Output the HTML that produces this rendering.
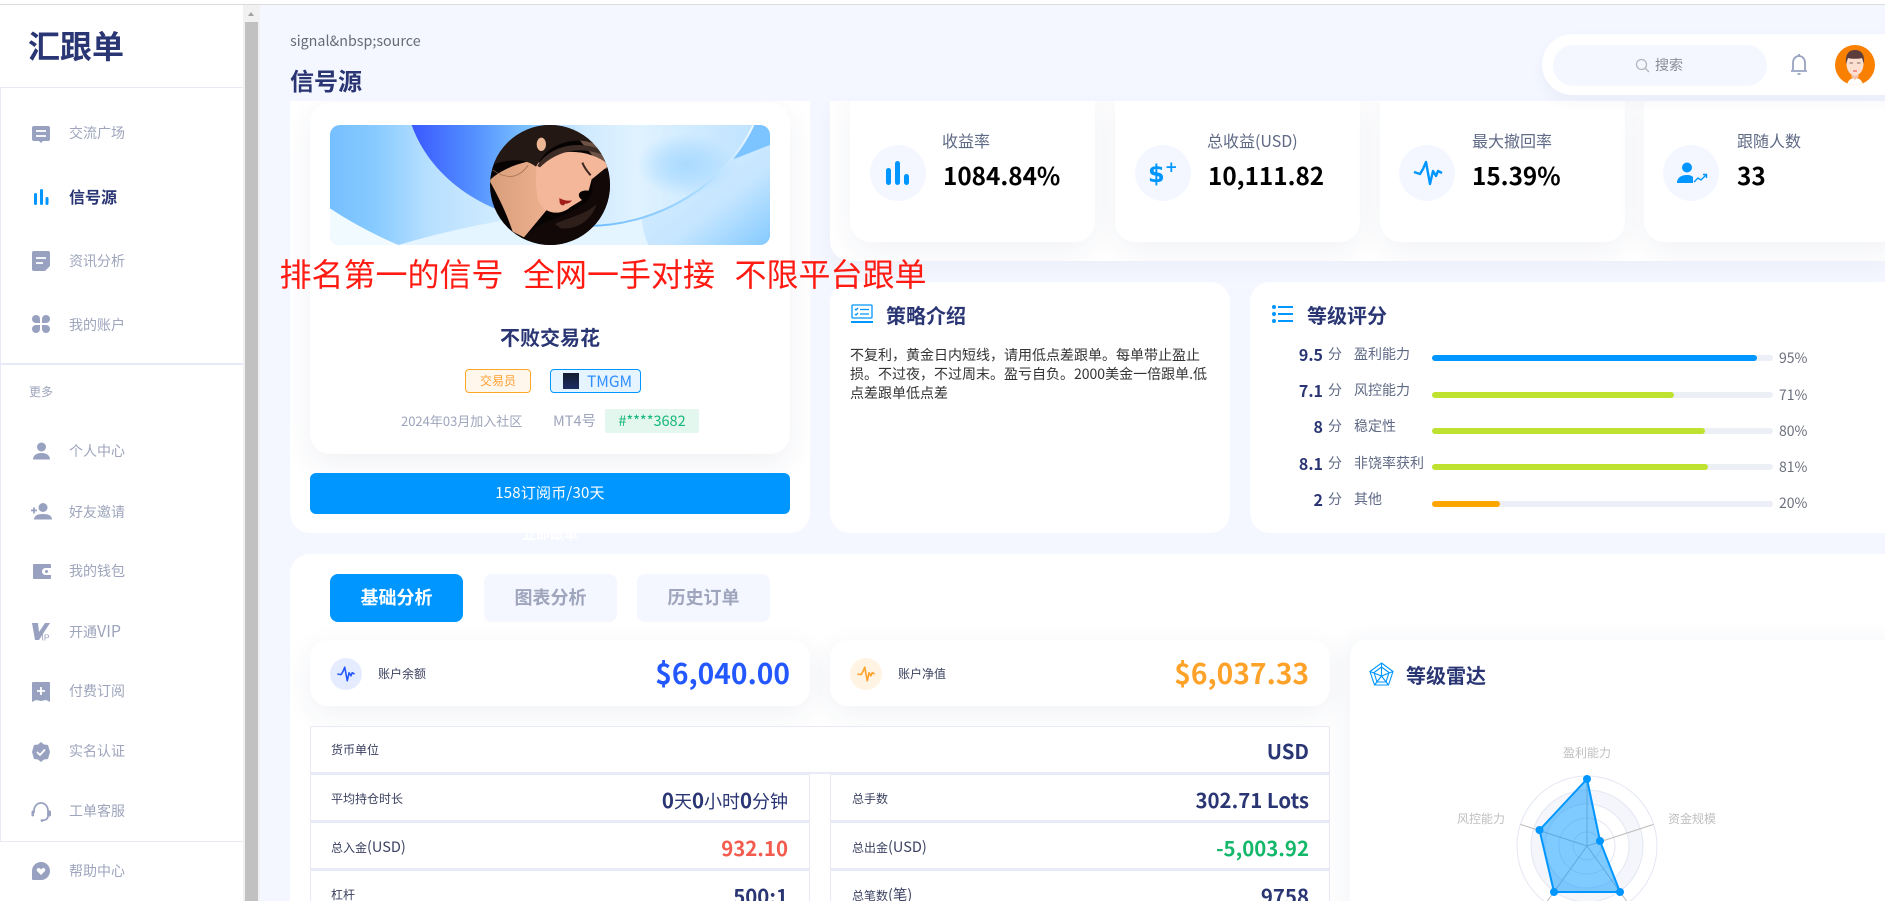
<!DOCTYPE html>
<html lang="zh"><head><meta charset="utf-8"><title>信号源</title>
<style>
html,body{margin:0;padding:0;width:1885px;height:901px;overflow:hidden;background:#f4f7ff}
body{position:relative;font-family:"Noto Sans CJK SC","Liberation Sans",sans-serif;color:#2a3573}
.a,.t{position:absolute}
.t{white-space:nowrap}
svg{position:absolute;overflow:visible}
.side{left:0;top:0;width:243px;height:901px;background:#fff}
.m{left:69px;font-size:14px;line-height:20px;color:#9ea5bc}
.card{background:#fff;border-radius:20px;box-shadow:0 10px 30px rgba(40,55,110,.06)}
.lab{font-size:16px;line-height:20px;color:#5f6a85}
.val{font-size:24.3px;line-height:32px;font-weight:700;color:#000}
.circ{border-radius:50%;background:#f4f7ff;width:56px;height:56px;top:145px}
.title{font-size:20px;line-height:28px;font-weight:700;color:#2a3573}
.sc{font-size:16px;line-height:20px;font-weight:700;text-align:right;width:60px;left:1263px}
.fen{left:1328px;font-size:14px;line-height:20px;color:#5f6a85}
.nm{left:1354px;font-size:14px;line-height:20px;color:#5f6a85}
.bar{left:1432px;width:341px;height:6px;border-radius:3px;background:#eceff6}
.fill{left:0;top:0;height:6px;border-radius:3px}
.pc{left:1779px;font-size:14px;line-height:20px;color:#6b6f7c}
.tab{top:574px;height:48px;line-height:47px;border-radius:8px;background:#f4f7ff;color:#9ea5bc;font-size:18px;font-weight:700;text-align:center}
.row{background:#fff;border:1px solid #e8ebf7;border-bottom-width:2px;box-sizing:border-box;height:48px}
.rl{font-size:12px;line-height:18px;color:#3a4060}
.rl span{font-size:14.5px}
.rv{font-size:20.4px;line-height:26px;font-weight:700;color:#2a3573;text-align:right}
.rv span{font-weight:400;font-size:18px}
.rd{font-size:12px;line-height:18px;color:#bfbfbf}
</style></head><body>

<!-- main top elements -->
<div class="t" style="left:290px;top:31px;font-size:14.3px;line-height:20px;color:#666b78">signal&amp;nbsp;source</div>
<div class="t" style="left:290px;top:62px;font-size:24px;line-height:36px;font-weight:700;color:#2a3573">信号源</div>

<!-- signal card -->
<div class="t" style="left:500px;top:524px;width:100px;text-align:center;color:#fff;font-size:14px;line-height:20px;font-weight:700">立即跟单</div>
<div class="a" style="left:290px;top:101px;width:520px;height:432px;background:#fff;border-radius:0 0 20px 20px;overflow:hidden">
  <div class="a" style="left:20px;top:2px;width:480px;height:351px;background:#fff;border-radius:20px;box-shadow:0 10px 30px rgba(40,55,110,.07)"></div>
</div>
<svg style="left:320px;top:120px" width="460" height="130" viewBox="0 0 1380 390">
<defs>
<clipPath id="bc"><rect x="30" y="15" width="1320" height="360" rx="30"/></clipPath>
<clipPath id="ac"><circle cx="690" cy="195" r="180"/></clipPath>
<linearGradient id="b0" x1="0" x2="1" y1="0" y2="0"><stop offset="0" stop-color="#76bfff"/><stop offset=".1" stop-color="#86caff"/><stop offset=".22" stop-color="#b6dfff"/><stop offset=".42" stop-color="#d6eeff"/><stop offset=".7" stop-color="#dcf1ff"/><stop offset="1" stop-color="#c6e7ff"/></linearGradient>
<linearGradient id="b1" gradientUnits="userSpaceOnUse" x1="275" y1="0" x2="1300" y2="0"><stop offset="0" stop-color="#3a58ff"/><stop offset=".18" stop-color="#5390ff"/><stop offset=".34" stop-color="#7cc2ff"/><stop offset=".5" stop-color="#cfeaff"/><stop offset=".66" stop-color="#e0f2ff"/><stop offset="1" stop-color="#bfe3ff"/></linearGradient>
<radialGradient id="blob"><stop offset="0" stop-color="#a9daff"/><stop offset=".5" stop-color="#a9daff" stop-opacity=".6"/><stop offset="1" stop-color="#a9daff" stop-opacity="0"/></radialGradient>
<linearGradient id="b2" x1="0" x2="1" y1="0" y2="1"><stop offset="0" stop-color="#d8efff"/><stop offset=".6" stop-color="#c6e6ff"/><stop offset="1" stop-color="#84caff"/></linearGradient>
<linearGradient id="ln" gradientUnits="userSpaceOnUse" x1="800" y1="320" x2="1300" y2="15"><stop offset="0" stop-color="#6ebcff"/><stop offset=".6" stop-color="#a8dbff"/><stop offset="1" stop-color="#f0f9ff"/></linearGradient>
<linearGradient id="sk" x1="0" x2="1" y1="0" y2="0"><stop offset="0" stop-color="#d89e7a"/><stop offset="1" stop-color="#eeb08f"/></linearGradient>
</defs>
<g clip-path="url(#bc)">
<rect x="30" y="15" width="1320" height="360" fill="url(#b0)"/>
<path d="M1240 118L1350 75V15H1290Z" fill="#7cc4ff"/>
<path d="M1240 118L1350 75V375H975Q960 330 965 300Z" fill="url(#b2)"/>
<path d="M30 265Q120 325 235 375H30Z" fill="#f0faff"/>
<path d="M235 375Q420 320 620 290L965 300Q970 340 985 375Z" fill="#e4f5ff"/>
<path d="M275 15C330 170 500 316 800 318C1020 318 1220 190 1300 15Z" fill="url(#b1)"/>
<ellipse cx="1100" cy="135" rx="150" ry="95" fill="url(#blob)"/>
<path d="M800 318C1020 318 1220 190 1300 15" fill="none" stroke="url(#ln)" stroke-width="6"/>
</g>
<g clip-path="url(#ac)">
<rect x="500" y="10" width="380" height="370" fill="#070303"/>
<path d="M740 15L880 25V170L820 110Z" fill="#6d5245"/>
<path d="M510 180C540 150 600 125 655 120L680 270L612 352L578 335C560 280 535 230 510 185Z" fill="url(#sk)"/>
<path d="M650 135C700 85 800 80 868 135L815 178L806 212C780 208 766 224 786 240L750 262C724 286 672 286 655 240C645 200 648 170 650 135Z" fill="#f5b79a"/>
<path d="M515 135C545 65 620 12 690 12C740 12 790 35 825 72C780 52 720 62 680 96C665 112 655 128 648 140C610 110 560 120 515 135Z" fill="#241815"/>
<path d="M652 138C680 86 770 50 858 96L852 106C780 78 715 90 660 142Z" fill="#3d2c26"/>
<ellipse cx="664" cy="73" rx="14" ry="20" fill="#ecb794"/>
<path d="M815 178L868 140C885 210 870 300 825 340C770 385 650 385 612 352C650 310 705 300 745 278C795 255 826 235 815 178Z" fill="#120807"/>
<path d="M705 312C745 292 795 285 830 252C815 300 772 330 722 325Z" fill="#2e1f1a"/>
<path d="M787 128C794 145 802 155 812 166" fill="none" stroke="#3c2620" stroke-width="6"/>
<path d="M718 234C728 240 742 244 756 241C751 249 742 251 736 251C730 260 722 256 719 248Z" fill="#a01d19"/>
<path d="M518 150C550 172 590 185 625 135" fill="none" stroke="#9a6a50" stroke-width="2"/>
</g>
</svg>

<div class="t" style="left:0;width:1100px;top:323px;text-align:center;font-size:20px;line-height:28px;font-weight:700">不败交易花</div>
<div class="a" style="left:465px;top:369px;width:66px;height:24px;box-sizing:border-box;border:1px solid #ffa726;border-radius:4px;background:#fff6ec;color:#ffa033;font-size:12px;line-height:22px;text-align:center">交易员</div>
<div class="a" style="left:550px;top:369px;width:91px;height:24px;box-sizing:border-box;border:1px solid #0096ff;border-radius:4px;background:#e6f4ff"></div>
<div class="a" style="left:563px;top:373px;width:16px;height:16px;background:linear-gradient(#141c2e,#1c2d63)"></div>
<div class="t" style="left:587px;top:371px;color:#2f8fff;font-size:15.500px;line-height:20px">TMGM</div>
<div class="t" style="left:401px;top:411px;color:#9ea5bc;font-size:13px;line-height:20px">2024年03月加入社区</div>
<div class="t" style="left:553px;top:411px;color:#9ea5bc;font-size:14.5px;line-height:20px">MT4号</div>
<div class="a" style="left:605px;top:409px;width:94px;height:24px;border-radius:2px;background:#e3f7ef;color:#14b87a;font-size:14.5px;line-height:24px;text-align:center">#****3682</div>
<div class="a" style="left:310px;top:473px;width:480px;height:41px;border-radius:6px;background:#0096ff;color:#fff;font-size:15px;line-height:40px;text-align:center;letter-spacing:.2px">158订阅币/30天</div>

<!-- stats -->
<div class="a" style="left:830px;top:101px;width:1055px;height:160px;background:#fff;border-radius:0 0 0 20px;overflow:hidden;box-shadow:0 8px 20px rgba(40,55,110,.04)">
  <div class="a card" style="left:20px;top:-20px;width:245px;height:161px"></div>
  <div class="a card" style="left:285px;top:-20px;width:245px;height:161px"></div>
  <div class="a card" style="left:550px;top:-20px;width:245px;height:161px"></div>
  <div class="a card" style="left:814px;top:-20px;width:260px;height:161px"></div>
</div>
<div class="a circ" style="left:870px"></div>
<div class="a circ" style="left:1135px"></div>
<div class="a circ" style="left:1399px"></div>
<div class="a circ" style="left:1663px"></div>
<svg style="left:886px;top:161px" width="24" height="24" viewBox="0 0 24 24" fill="#0096ff"><rect x="0" y="7" width="5" height="17" rx="2.5"/><rect x="9" y="0" width="5" height="24" rx="2.5"/><rect x="18" y="13" width="5" height="11" rx="2.5"/></svg>
<div class="t" style="left:1148px;top:159px;font-family:'DejaVu Sans',sans-serif;font-size:24px;line-height:30px;font-weight:700;color:#0096ff">$</div>
<div class="t" style="left:1165px;top:158px;font-family:'DejaVu Sans',sans-serif;font-size:15px;line-height:18px;font-weight:700;color:#0096ff">+</div>
<svg style="left:1413px;top:160px" width="30" height="26" viewBox="0 0 30 26" fill="none" stroke="#0096ff" stroke-width="2.4" stroke-linejoin="round"><path d="M1 12L7 14L10 9L13 2L17 24L20 11L23 16L25 11L29 13"/></svg>
<svg style="left:1677px;top:162px" width="30" height="22" viewBox="0 0 30 22"><circle cx="10" cy="5.500" r="5" fill="#0096ff"/><path d="M0 21C0 15 5 13 10 13C13 13 15 14 16 15V21Z" fill="#0096ff"/><path d="M17 20L21 16L24 18L29 13M26 12.500L29.500 12.500V16" fill="none" stroke="#0096ff" stroke-width="1.400"/></svg>
<div class="t lab" style="left:942px;top:130px">收益率</div>
<div class="t val" style="left:943px;top:159px">1084.84%</div>
<div class="t lab" style="left:1207px;top:130px">总收益(USD)</div>
<div class="t val" style="left:1208px;top:159px">10,111.82</div>
<div class="t lab" style="left:1472px;top:130px">最大撤回率</div>
<div class="t val" style="left:1472px;top:159px">15.39%</div>
<div class="t lab" style="left:1737px;top:130px">跟随人数</div>
<div class="t val" style="left:1737px;top:159px">33</div>

<!-- header pill -->
<div class="a" style="left:1542px;top:34px;width:400px;height:61px;border-radius:31px;background:#fff;box-shadow:0 6px 14px rgba(40,55,110,.05)"></div>
<div class="a" style="left:1553px;top:45px;width:214px;height:41px;border-radius:21px;background:#f4f7ff"></div>
<svg style="left:1635px;top:58px" width="15" height="15" viewBox="0 0 15 15" fill="none" stroke="#b3b6bd" stroke-width="1.300"><circle cx="6.500" cy="6.500" r="5"/><path d="M10 10L14 14"/></svg>
<div class="t" style="left:1655px;top:55px;font-size:14px;line-height:20px;color:#8a8d96">搜索</div>
<svg style="left:1790px;top:53px" width="18" height="23" viewBox="0 0 18 23" fill="none" stroke="#98a2c0" stroke-width="1.800"><path d="M3 17V10C3 6 5.500 3 9 3C12.500 3 15 6 15 10V17M1 18H17"/><path d="M9 1V3M7.500 21H10.500"/></svg>
<svg style="left:1835px;top:45px" width="40" height="40" viewBox="0 0 40 40"><defs><clipPath id="ua"><circle cx="20" cy="20" r="20"/></clipPath></defs><circle cx="20" cy="20" r="20" fill="#f98000"/><g clip-path="url(#ua)"><path d="M12 40C13 35 16 33 20 33C24 33 27 35 28 40Z" fill="#fff"/><path d="M16.500 26H23.500V32L20 35L16.500 32Z" fill="#f5c4ae"/><ellipse cx="20" cy="19" rx="8.500" ry="11.500" fill="#fbe0d2"/><path d="M11 19C10 9 14 5 20 5C26 5 30 9 29 19L27 13C24 14 16 14 13 13Z" fill="#5d3c3c"/><path d="M14.500 18H18M22 18H25.500" stroke="#8a6a60" stroke-width="1"/><path d="M18 26H22" stroke="#f07a70" stroke-width="1.500"/></g></svg>

<!-- strategy -->
<div class="a" style="left:830px;top:282px;width:400px;height:251px;background:#fff;border-radius:20px"></div>
<svg style="left:851px;top:304px" width="22" height="20" viewBox="0 0 22 20" fill="none" stroke="#0096ff" stroke-width="1.300"><rect x="1" y="1" width="20" height="13" rx="1"/><path d="M0 18H22" stroke-width="2"/><path d="M4 5L5 6L7 4M4 10L5 11L7 9M9 5.500H18M9 10H18"/></svg>
<div class="t title" style="left:886px;top:301px">策略介绍</div>
<div class="a" style="left:850px;top:346px;width:362px;font-size:14px;line-height:19px;color:#333;white-space:nowrap">不复利，黄金日内短线，请用低点差跟单。每单带止盈止<br>损。不过夜，不过周末。盈亏自负。2000美金一倍跟单.低<br>点差跟单低点差</div>

<!-- rating -->
<div class="a" style="left:1250px;top:282px;width:680px;height:251px;background:#fff;border-radius:20px"></div>
<svg style="left:1272px;top:305px" width="21" height="18" viewBox="0 0 21 18" fill="#0096ff"><circle cx="2" cy="2" r="2"/><circle cx="2" cy="9" r="2"/><circle cx="2" cy="16" r="2"/><rect x="6" y="1" width="15" height="2"/><rect x="6" y="8" width="15" height="2"/><rect x="6" y="15" width="15" height="2"/></svg>
<div class="t title" style="left:1307px;top:301px">等级评分</div>

<div class="t sc" style="top:344px">9.5</div><div class="t fen" style="top:344px">分</div><div class="t nm" style="top:344px">盈利能力</div>
<div class="a bar" style="top:355px"><div class="a fill" style="width:325px;background:#0096ff"></div></div><div class="t pc" style="top:348px">95%</div>
<div class="t sc" style="top:380px">7.1</div><div class="t fen" style="top:380px">分</div><div class="t nm" style="top:380px">风控能力</div>
<div class="a bar" style="top:392px"><div class="a fill" style="width:242px;background:#bfe231"></div></div><div class="t pc" style="top:385px">71%</div>
<div class="t sc" style="top:416px">8</div><div class="t fen" style="top:416px">分</div><div class="t nm" style="top:416px">稳定性</div>
<div class="a bar" style="top:428px"><div class="a fill" style="width:273px;background:#bfe231"></div></div><div class="t pc" style="top:421px">80%</div>
<div class="t sc" style="top:453px">8.1</div><div class="t fen" style="top:453px">分</div><div class="t nm" style="top:453px">非饶率获利</div>
<div class="a bar" style="top:464px"><div class="a fill" style="width:276px;background:#bfe231"></div></div><div class="t pc" style="top:457px">81%</div>
<div class="t sc" style="top:489px">2</div><div class="t fen" style="top:489px">分</div><div class="t nm" style="top:489px">其他</div>
<div class="a bar" style="top:501px"><div class="a fill" style="width:68px;background:#ffa500"></div></div><div class="t pc" style="top:493px">20%</div>

<!-- bottom section -->
<div class="a" style="left:290px;top:554px;width:1640px;height:360px;background:#fff;border-radius:20px 0 0 0"></div>
<div class="a tab" style="left:330px;width:133px;background:#0096ff;color:#fff">基础分析</div>
<div class="a tab" style="left:484px;width:133px">图表分析</div>
<div class="a tab" style="left:637px;width:133px">历史订单</div>

<div class="a" style="left:310px;top:640px;width:500px;height:66px;border-radius:18px;background:#fff;box-shadow:0 8px 30px rgba(40,55,110,.07)"></div>
<div class="a" style="left:830px;top:640px;width:500px;height:66px;border-radius:18px;background:#fff;box-shadow:0 8px 30px rgba(40,55,110,.07)"></div>
<div class="a" style="left:330px;top:658px;width:32px;height:32px;border-radius:50%;background:#e6ecff"></div>
<div class="a" style="left:850px;top:658px;width:32px;height:32px;border-radius:50%;background:#fff3e3"></div>
<svg style="left:336px;top:666px" width="20" height="16" viewBox="0 0 30 26" fill="none" stroke="#2458ff" stroke-width="2.600" stroke-linejoin="round"><path d="M1 13L7 14L10 9L13 2L17 24L20 11L23 16L25 11L29 13"/></svg>
<svg style="left:856px;top:666px" width="20" height="16" viewBox="0 0 30 26" fill="none" stroke="#ffa229" stroke-width="2.600" stroke-linejoin="round"><path d="M1 13L7 14L10 9L13 2L17 24L20 11L23 16L25 11L29 13"/></svg>
<div class="t rl" style="left:378px;top:665px">账户余额</div>
<div class="t rl" style="left:898px;top:665px">账户净值</div>
<div class="t" style="right:1095px;top:653px;font-size:28.2px;line-height:40px;font-weight:700;color:#2458ff">$6,040.00</div>
<div class="t" style="right:576px;top:653px;font-size:28.2px;line-height:40px;font-weight:700;color:#ffa229">$6,037.33</div>

<div class="a row" style="left:310px;top:726px;width:1020px"></div>
<div class="a row" style="left:310px;top:774px;width:500px"></div>
<div class="a row" style="left:830px;top:774px;width:500px"></div>
<div class="a row" style="left:310px;top:822px;width:500px"></div>
<div class="a row" style="left:830px;top:822px;width:500px"></div>
<div class="a row" style="left:310px;top:870px;width:500px"></div>
<div class="a row" style="left:830px;top:870px;width:500px"></div>

<div class="t rl" style="left:331px;top:741px">货币单位</div>
<div class="t rv" style="right:576px;top:737px">USD</div>
<div class="t rl" style="left:331px;top:790px">平均持仓时长</div>
<div class="t rv" style="right:1097px;top:786px">0<span>天</span>0<span>小时</span>0<span>分钟</span></div>
<div class="t rl" style="left:852px;top:790px">总手数</div>
<div class="t rv" style="right:576px;top:786px">302.71 Lots</div>
<div class="t rl" style="left:331px;top:838px">总入金<span>(USD)</span></div>
<div class="t rv" style="right:1097px;top:834px;color:#f45b4f">932.10</div>
<div class="t rl" style="left:852px;top:838px">总出金<span>(USD)</span></div>
<div class="t rv" style="right:576px;top:834px;color:#14b86a">-5,003.92</div>
<div class="t rl" style="left:331px;top:886px">杠杆</div>
<div class="t rv" style="right:1097px;top:882px">500:1</div>
<div class="t rl" style="left:852px;top:886px">总笔数<span>(笔)</span></div>
<div class="t rv" style="right:576px;top:882px">9758</div>

<!-- radar -->
<div class="a" style="left:1350px;top:640px;width:560px;height:300px;background:#fff;border-radius:16px 0 0 0;box-shadow:-6px 0 24px rgba(40,55,110,.05)"></div>
<svg style="left:1369px;top:662px" width="25" height="24" viewBox="0 0 25 24" fill="none" stroke="#0096ff" stroke-width="1.100"><path d="M12.500 1L24 9.500L19.500 23H5.500L1 9.500Z"/><path d="M12.500 5L20 10.500L17 20H8L5 10.500Z"/><path d="M12.500 1V14L5.500 23M12.500 14L19.500 23M1 9.500L12.500 14L24 9.500"/></svg>
<div class="t title" style="left:1406px;top:661px">等级雷达</div>
<div class="t rd" style="left:1547px;width:80px;text-align:center;top:744px">盈利能力</div>
<div class="t rd" style="left:1441px;width:80px;text-align:center;top:810px">风控能力</div>
<div class="t rd" style="left:1652px;width:80px;text-align:center;top:810px">资金规模</div>
<svg style="left:1350px;top:640px" width="535" height="261" viewBox="0 0 535 261">
<defs><clipPath id="rc"><rect width="535" height="261"/></clipPath></defs>
<g clip-path="url(#rc)">
<circle cx="237" cy="206" r="70" fill="#fff" stroke="#e3e7f2"/>
<circle cx="237" cy="206" r="56" fill="#f4f6fb" stroke="#e3e7f2"/>
<circle cx="237" cy="206" r="42" fill="#fff" stroke="#e3e7f2"/>
<circle cx="237" cy="206" r="28" fill="#fff" stroke="#e3e7f2"/>
<circle cx="237" cy="206" r="14" fill="#fff" stroke="#e3e7f2"/>
<path d="M237 206V136M237 206L303.600 184.400M237 206L278 263M237 206L196 263M237 206L170.400 184.400" stroke="#bcbcbc" stroke-width="1"/>
<path d="M237 139L250 201L270 252H204L189.500 190Z" fill="rgba(0,150,255,.5)" stroke="#0096ff" stroke-width="2" stroke-linejoin="round"/>
<g fill="#0096ff"><circle cx="237" cy="139" r="4"/><circle cx="250" cy="201" r="4"/><circle cx="270" cy="252" r="4"/><circle cx="204" cy="252" r="4"/><circle cx="189.500" cy="190" r="4"/></g>
</g>
</svg>

<!-- red overlay text -->
<div class="t" style="left:279.500px;top:250px;font-size:32px;line-height:46px;color:#ff1a12">排名第一的信号<span style="margin-left:19.500px">全网一手对接</span><span style="margin-left:19.500px">不限平台跟单</span></div>

<!-- sidebar -->
<div class="a side"></div>
<div class="a" style="left:0;top:87px;width:243px;height:1px;background:#e8ebf7"></div>
<div class="a" style="left:0;top:363px;width:243px;height:2px;background:#e8ebf7"></div>
<div class="a" style="left:0;top:841px;width:243px;height:1px;background:#e8ebf7"></div>
<div class="a" style="left:0;top:87px;width:1px;height:754px;background:#e8ebf7"></div>
<div class="t" style="left:28px;top:22px;font-size:32px;line-height:46px;font-weight:700;color:#2a3573">汇跟单</div>

<div class="t m" style="top:123px">交流广场</div>
<div class="t m" style="top:186px;font-size:16px;font-weight:700;color:#2a3573">信号源</div>
<div class="t m" style="top:251px">资讯分析</div>
<div class="t m" style="top:315px">我的账户</div>
<div class="t" style="left:29px;top:383px;font-size:12px;line-height:18px;color:#9ea5bc">更多</div>
<div class="t m" style="top:441px">个人中心</div>
<div class="t m" style="top:502px">好友邀请</div>
<div class="t m" style="top:561px">我的钱包</div>
<div class="t m" style="top:620px">开通<span style="font-size:16px">VIP</span></div>
<div class="t m" style="top:681px">付费订阅</div>
<div class="t m" style="top:741px">实名认证</div>
<div class="t m" style="top:801px">工单客服</div>
<div class="t m" style="top:861px">帮助中心</div>

<svg style="left:31px;top:124px" width="20" height="20" viewBox="0 0 20 20"><path d="M3 2H17Q19 2 19 4V15Q19 17 17 17H12L10 19L8 17H3Q1 17 1 15V4Q1 2 3 2Z" fill="#98a2c0"/><path d="M5 7H15M5 12H15" stroke="#fff" stroke-width="1.800"/></svg>
<svg style="left:33px;top:189px" width="16" height="16" viewBox="0 0 16 16" fill="#0096ff"><rect x="1" y="4" width="3" height="12" rx="1.500"/><rect x="7" y="0" width="3" height="16" rx="1.500"/><rect x="12.500" y="8" width="3" height="8" rx="1.500"/></svg>
<svg style="left:32px;top:251px" width="18" height="20" viewBox="0 0 18 20"><path d="M2 0H16Q18 0 18 2V15L13 20H2Q0 20 0 18V2Q0 0 2 0Z" fill="#98a2c0"/><path d="M4 7H14M4 12H11" stroke="#fff" stroke-width="1.800"/></svg>
<svg style="left:32px;top:315px" width="18" height="18" viewBox="0 0 18 18" fill="#98a2c0"><path d="M0 4A4 4 0 0 1 8 4V8H4A4 4 0 0 1 0 4Z"/><path d="M18 4A4 4 0 0 0 10 4V8H14A4 4 0 0 0 18 4Z"/><path d="M0 14A4 4 0 0 0 8 14V10H4A4 4 0 0 0 0 14Z"/><path d="M18 14A4 4 0 0 1 10 14V10H14A4 4 0 0 1 18 14Z"/></svg>
<svg style="left:33px;top:442px" width="17" height="18" viewBox="0 0 17 18" fill="#98a2c0"><circle cx="8.500" cy="5" r="4.500"/><path d="M0 17.500C0 13 4 11 8.500 11S17 13 17 17.500Z"/></svg>
<svg style="left:30px;top:503px" width="22" height="17" viewBox="0 0 22 17" fill="#98a2c0"><circle cx="13" cy="4.500" r="4.500"/><path d="M4 16.500C4 12.500 8 11 13 11S22 12.500 22 16.500Z"/><rect x="1" y="6.500" width="6" height="1.800"/><rect x="3.100" y="4.400" width="1.800" height="6"/></svg>
<svg style="left:33px;top:564px" width="18" height="15" viewBox="0 0 18 15"><path d="M1 0H17Q18 0 18 1V14Q18 15 17 15H1Q0 15 0 14V1Q0 0 1 0Z" fill="#98a2c0"/><path d="M18 4H12.500A3.500 3.500 0 0 0 12.500 11H18Z" fill="#fff"/><circle cx="13.500" cy="7.500" r="1.500" fill="#98a2c0"/></svg>
<svg style="left:32px;top:623px" width="19" height="18" viewBox="0 0 19 18"><path d="M0 0H6L7 9L13 0H18L7 17H3Z" fill="#98a2c0"/><text x="9.500" y="17.500" font-size="8.500" fill="#98a2c0" font-family="Liberation Sans,sans-serif">IP</text></svg>
<svg style="left:32px;top:682px" width="18" height="20" viewBox="0 0 18 20"><path d="M1 0H17Q18 0 18 1V20L14 18L9 19L4 18L0 20V1Q0 0 1 0Z" fill="#98a2c0"/><path d="M5 9H13M9 5V13" stroke="#fff" stroke-width="1.800"/></svg>
<svg style="left:32px;top:742px" width="18" height="20" viewBox="0 0 18 20"><path d="M9 0L12 2.500L16 3L17 6.500L18 10L17 13.500L16 17L12 17.500L9 20L6 17.500L2 17L1 13.500L0 10L1 6.500L2 3L6 2.500Z" fill="#98a2c0"/><path d="M5 10L8 13L13 7.500" fill="none" stroke="#fff" stroke-width="1.800"/></svg>
<svg style="left:31px;top:802px" width="20" height="20" viewBox="0 0 20 20" fill="none" stroke="#98a2c0"><path d="M3 11V9C3 4.500 6 1 10 1S17 4.500 17 9V14C17 16.500 15 18 12 18.500" stroke-width="1.800"/><rect x="0.500" y="8.500" width="2.500" height="6" rx="1.200" fill="#98a2c0" stroke="none"/><rect x="17" y="8.500" width="3" height="6" rx="1.200" fill="#98a2c0" stroke="none"/><circle cx="11" cy="18.500" r="1.400" fill="#98a2c0" stroke="none"/></svg>
<svg style="left:32px;top:862px" width="18" height="18" viewBox="0 0 18 18"><path d="M9 0A9 9 0 1 1 9 18H1Q0 18 0 17V9A9 9 0 0 1 9 0Z" fill="#98a2c0"/><path d="M9 13L5 9Q4 6.500 6.500 6Q8 6 9 7.500Q10 6 11.500 6Q14 6.500 13 9Z" fill="#fff"/></svg>

<!-- scrollbar -->
<div class="a" style="left:243px;top:5px;width:17px;height:896px;background:#f1f1f1"></div>
<div class="a" style="left:245px;top:22px;width:13px;height:879px;background:#c1c1c1"></div>
<div class="a" style="left:248px;top:12px;width:0;height:0;border-left:3.500px solid transparent;border-right:3.500px solid transparent;border-bottom:4px solid #a3a3a3"></div>
<!-- top line -->
<div class="a" style="left:0;top:0;width:1885px;height:4px;background:#fff"></div>
<div class="a" style="left:0;top:4px;width:1885px;height:1px;background:#dcdcdc"></div>
</body></html>
